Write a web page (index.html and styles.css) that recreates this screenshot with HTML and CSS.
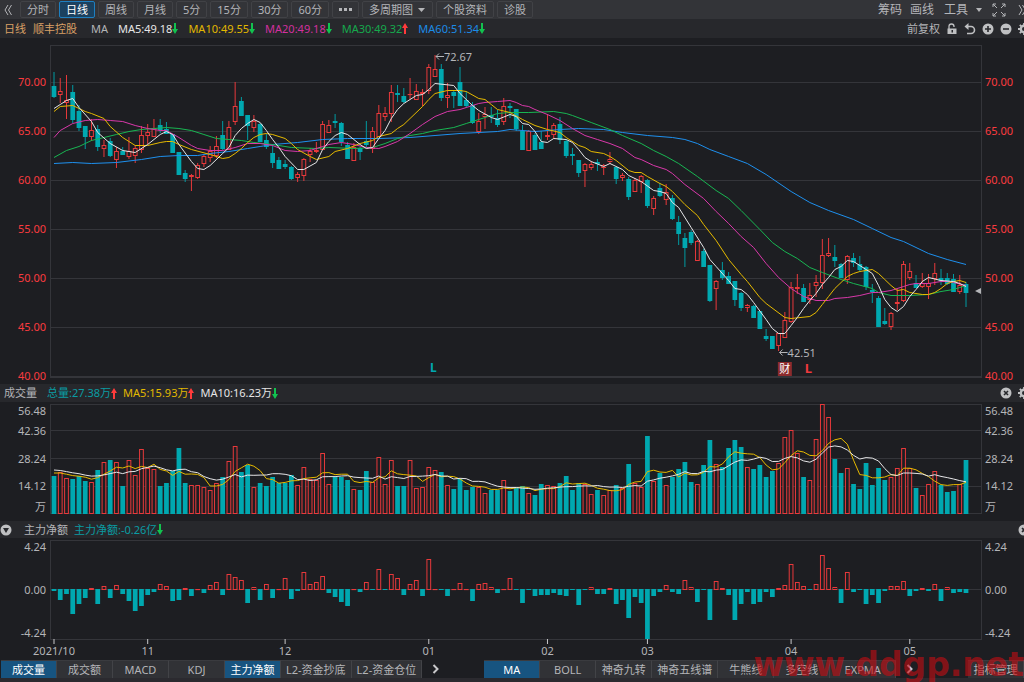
FILE: index.html
```html
<!DOCTYPE html>
<html lang="zh-CN">
<head>
    <meta charset="UTF-8">
    <meta name="viewport" content="width=device-width, initial-scale=1.0">
    <title>顺丰控股 日线</title>
    <link rel="stylesheet" href="styles.css">
</head>
<body>
    <!-- arrows used next to the indicator values -->
    <svg class="defs" width="0" height="0">
        <symbol id="down" viewBox="0 0 6 11"><path d="M2 0h2v6h2L3 11 0 6h2z" fill="#12c24f"/></symbol>
        <symbol id="up" viewBox="0 0 6 11"><path d="M2 11h2V5h2L3 0 0 5h2z" fill="#ff3b3b"/></symbol>
        <symbol id="gear" viewBox="0 0 12 12"><circle cx="6" cy="6" r="3.2" fill="none" stroke="#bfc0c2" stroke-width="2.4"/><path d="M6 0v12M0 6h12M1.8 1.8l8.4 8.4M10.2 1.8l-8.4 8.4" stroke="#bfc0c2" stroke-width="1.8"/><circle cx="6" cy="6" r="2" fill="#28292d"/></symbol>
        <symbol id="close" viewBox="0 0 12 12"><circle cx="6" cy="6" r="5.5" fill="#bfc0c2"/><path d="M4 4l4 4M8 4l-4 4" stroke="#28292d" stroke-width="1.6"/></symbol>
    </svg>

    <nav class="toolbar">
        <button class="icon-btn back" aria-label="收起"><svg width="8" height="12" viewBox="0 0 8 12"><path d="M4 1L1 6l3 5M7.5 1l-3 5 3 5" fill="none" stroke="#b4b5b8"/></svg></button>
        <button class="btn">分时</button>
        <button class="btn active">日线</button>
        <button class="btn">周线</button>
        <button class="btn">月线</button>
        <button class="btn">5分</button>
        <button class="btn">15分</button>
        <button class="btn">30分</button>
        <button class="btn">60分</button>
        <button class="btn dots" aria-label="更多"><svg width="13" height="3" viewBox="0 0 13 3"><path d="M0 0h3v3H0zM5 0h3v3H5zM10 0h3v3h-3z" fill="#b4b5b8"/></svg></button>
        <button class="btn">多周期图 <svg width="8" height="4" viewBox="0 0 8 4"><path d="M0 0h7L3.5 4z" fill="#b4b5b8"/></svg></button>
        <button class="btn">个股资料</button>
        <button class="btn">诊股</button>
        <div class="tools">
            <button class="link-btn">筹码</button>
            <button class="link-btn">画线</button>
            <button class="link-btn tool-menu">工具 <svg width="6" height="4" viewBox="0 0 6 4"><path d="M0 0h6L3 4z" fill="#b4b5b8"/></svg></button>
            <button class="icon-btn" aria-label="全屏"><svg width="14" height="14" viewBox="0 0 14 14"><path d="M1 4V1h3M1 1l4 4M10 1h3v3M13 1L9 5M1 10v3h3M1 13l4-4M13 10v3h-3M13 13L9 9" fill="none" stroke="#b4b5b8"/></svg></button>
            <button class="icon-btn more" aria-label="展开"><svg width="8" height="12" viewBox="0 0 8 12"><path d="M1 1l3 5-3 5M4.5 1l3 5-3 5" fill="none" stroke="#b4b5b8"/></svg></button>
        </div>
    </nav>

    <header class="bar">
        <span class="orange">日线</span>
        <span class="orange name">顺丰控股</span>
        <span class="ma">MA</span>
        <span class="value white">MA5:49.18<svg width="6" height="11"><use href="#down"/></svg></span>
        <span class="value yellow">MA10:49.55<svg width="6" height="11"><use href="#down"/></svg></span>
        <span class="value pink">MA20:49.18<svg width="6" height="11"><use href="#down"/></svg></span>
        <span class="value green">MA30:49.32<svg width="6" height="11"><use href="#up"/></svg></span>
        <span class="value blue">MA60:51.34<svg width="6" height="11"><use href="#down"/></svg></span>
        <div class="bar-tools">
            <button class="link-btn small">前复权</button>
            <button class="icon-btn" aria-label="锁定"><svg width="12" height="12" viewBox="0 0 12 12"><path d="M3 6V3.5a2.5 2.5 0 0 1 5 0V4" fill="none" stroke="#bfc0c2" stroke-width="1.3"/><path d="M1.5 5.5h9V11h-9z" fill="#bfc0c2"/><path d="M5.5 7H7v2.5H5.5z" fill="#28292d"/></svg></button>
            <button class="icon-btn" aria-label="撤销"><svg width="12" height="12" viewBox="0 0 12 12"><path d="M2 3.5h5a3.4 3.4 0 0 1 0 7H3" fill="none" stroke="#bfc0c2" stroke-width="1.6"/><path d="M4.5 0v7L.5 3.5z" fill="#bfc0c2"/></svg></button>
            <button class="icon-btn" aria-label="放大"><svg width="12" height="12" viewBox="0 0 12 12"><circle cx="6" cy="6" r="5.5" fill="#bfc0c2"/><path d="M6 3v6M3 6h6" stroke="#28292d" stroke-width="1.6"/></svg></button>
            <button class="icon-btn" aria-label="缩小"><svg width="12" height="12" viewBox="0 0 12 12"><circle cx="6" cy="6" r="5.5" fill="#bfc0c2"/><path d="M3 6h6" stroke="#28292d" stroke-width="1.6"/></svg></button>
            <button class="icon-btn" aria-label="设置"><svg width="12" height="12"><use href="#gear"/></svg></button>
        </div>
    </header>

    <section class="pane">
        <div class="axis price-axis left">
            <span>70.00</span><span>65.00</span><span>60.00</span><span>55.00</span><span>50.00</span><span>45.00</span><span>40.00</span>
        </div>
        <svg id="price" class="plot price-plot"></svg>
        <div class="axis price-axis">
            <span>70.00</span><span>65.00</span><span>60.00</span><span>55.00</span><span>50.00</span><span>45.00</span><span>40.00</span>
        </div>
    </section>

    <header class="bar">
        <span class="pane-name">成交量</span>
        <span class="value teal">总量:27.38万<svg width="6" height="11"><use href="#up"/></svg></span>
        <span class="value yellow tight">MA5:15.93万<svg width="6" height="11"><use href="#up"/></svg></span>
        <span class="value white tight">MA10:16.23万<svg width="6" height="11"><use href="#down"/></svg></span>
        <div class="bar-tools">
            <button class="icon-btn" aria-label="关闭"><svg width="12" height="12"><use href="#close"/></svg></button>
            <button class="icon-btn" aria-label="设置"><svg width="12" height="12"><use href="#gear"/></svg></button>
        </div>
    </header>

    <section class="pane">
        <div class="axis volume-axis left">
            <span>56.48</span><span>42.36</span><span>28.24</span><span>14.12</span><span>万</span>
        </div>
        <svg id="volume" class="plot volume-plot"></svg>
        <div class="axis volume-axis">
            <span>56.48</span><span>42.36</span><span>28.24</span><span>14.12</span><span>万</span>
        </div>
    </section>

    <header class="bar flow-bar">
        <button class="icon-btn" aria-label="切换指标"><svg width="12" height="12" viewBox="0 0 12 12"><circle cx="6" cy="6" r="5.5" fill="#bfc0c2"/><path d="M3 4h6L6 9z" fill="#28292d"/></svg></button>
        <span class="flow-name">主力净额</span>
        <span class="value teal">主力净额:-0.26亿<svg width="6" height="11"><use href="#down"/></svg></span>
        <div class="bar-tools">
            <button class="icon-btn" aria-label="关闭"><svg width="12" height="12"><use href="#close"/></svg></button>
        </div>
    </header>

    <section class="pane">
        <div class="axis flow-axis left"><span>4.24</span><span>0.00</span><span>-4.24</span></div>
        <svg id="flow" class="plot flow-plot"></svg>
        <div class="axis flow-axis"><span>4.24</span><span>0.00</span><span>-4.24</span></div>
    </section>

    <footer class="tabs">
        <div class="tab-group">
            <button class="tab active">成交量</button>
            <button class="tab">成交额</button>
            <button class="tab">MACD</button>
            <button class="tab">KDJ</button>
            <button class="tab active">主力净额</button>
            <button class="tab">L2-资金抄底</button>
            <button class="tab">L2-资金仓位</button>
            <button class="next" aria-label="更多指标"><svg width="8" height="10" viewBox="0 0 8 10"><path d="M1.5 1l4 4-4 4" fill="none" stroke="#c8c8ca" stroke-width="2"/></svg></button>
        </div>
        <div class="tab-group main-group">
            <button class="tab active">MA</button>
            <button class="tab">BOLL</button>
            <button class="tab">神奇九转</button>
            <button class="tab">神奇五线谱</button>
            <button class="tab">牛熊线</button>
            <button class="tab">多空线</button>
            <button class="tab wide">EXPMA</button>
            <button class="next" aria-label="更多主图指标"><svg width="8" height="10" viewBox="0 0 8 10"><path d="M1.5 1l4 4-4 4" fill="none" stroke="#c8c8ca" stroke-width="2"/></svg></button>
        </div>
        <button class="tab manage">指标管理</button>
        <div class="watermark">www.ddgp.net</div>
    </footer>

    <script src="chart.js"></script>
</body>
</html>
```
FILE: styles.css
```css
* {
    box-sizing: border-box;
}

body {
    margin: 0;
    min-height: 100vh;
    background: #1d1e22;
    color: #b4b5b8;
    font-family: "Noto Sans", "Noto Sans CJK SC", sans-serif;
    font-size: 11px;
    line-height: 16px;
    overflow: hidden;
}

button {
    margin: 0;
    padding: 0;
    border: none;
    background: none;
    color: inherit;
    font: inherit;
    white-space: nowrap;
    cursor: pointer;
}

svg {
    flex-shrink: 0;
}

.defs {
    display: block;
}

/* toolbar */
.toolbar {
    display: flex;
    align-items: center;
    gap: 3px;
    height: 19px;
    background: #333438;
    overflow: hidden;
}

.icon-btn {
    display: flex;
    align-items: center;
    flex-shrink: 0;
}

.back {
    width: 17px;
    padding-left: 4px;
}

.btn {
    display: flex;
    align-items: center;
    gap: 5px;
    height: 17px;
    padding: 0 6px;
    border: 1px solid #414246;
    border-radius: 2px;
}

.btn.active {
    border-color: #1e7fc0;
    background: #1b415f;
    color: #fff;
}

.tools {
    display: flex;
    align-items: center;
    gap: 8px;
    margin-left: auto;
    margin-right: -2px;
}

.link-btn {
    font-size: 12px;
}

.link-btn.small {
    font-size: 11px;
}

.tool-menu {
    display: flex;
    align-items: center;
    gap: 8px;
    margin: 0 2px;
}

.more {
    margin-left: 4px;
}

/* indicator bars */
.bar {
    display: flex;
    align-items: center;
    height: 19px;
    padding-left: 4px;
    background: #27282c;
    white-space: nowrap;
    overflow: hidden;
}

.pane + .bar {
    height: 18px;
}

.pane + .flow-bar {
    height: 17px;
    padding-left: 0;
}

.name {
    margin-left: 7px;
}

.ma {
    margin-left: 14px;
}

.value {
    display: flex;
    align-items: center;
    margin-left: 10px;
}

.value.tight {
    margin-left: 6px;
}

.flow-name {
    margin: 0 -4px 0 12px;
}

.bar-tools {
    display: flex;
    align-items: center;
    gap: 6px;
    margin-left: auto;
    margin-right: -6px;
}

.orange { color: #d9a066; }
.white { color: #e6e6e6; }
.yellow { color: #e2b800; }
.pink { color: #d2309f; }
.green { color: #16a84c; }
.blue { color: #1c8be6; }
.teal { color: #0a9ca3; }

/* chart panes */
.pane {
    display: grid;
    grid-template-columns: 50px 1fr 42px;
}

.plot {
    display: block;
    width: 100%;
    overflow: visible;
    font-size: 11px;
}

.price-plot { height: 346px; }
.volume-plot { height: 119px; }
.flow-plot { height: 122px; }

.axis {
    padding-left: 3px;
}

.axis.left {
    padding-left: 0;
    padding-right: 4px;
    text-align: right;
}

.price-axis {
    display: flex;
    flex-direction: column;
    justify-content: space-between;
    padding-top: 36px;
    color: #fa3b3f;
}

.volume-axis {
    display: grid;
    grid-template-rows: 18px 22px 34px 20px 22px;
    align-items: center;
}

.flow-axis {
    display: flex;
    flex-direction: column;
    justify-content: space-between;
    padding-top: 1px;
    padding-bottom: 19px;
}

/* chart shapes */
.frame, .grid {
    fill: none;
    stroke: #34353a;
    shape-rendering: crispEdges;
}

.rise {
    fill: #1d1e22;
    stroke: #e8393b;
}

.fall {
    fill: #00a8b0;
    stroke: none;
}

.rise-wick { stroke: #e8393b; }
.fall-wick { stroke: #009ba2; }

.line {
    fill: none;
    stroke-width: 1;
    stroke-linejoin: round;
}

.line-white { stroke: #e6e6e8; }
.line-yellow { stroke: #e6ba00; }
.line-pink { stroke: #d938aa; }
.line-green { stroke: #18b652; }
.line-blue { stroke: #1e90ee; }

.tick {
    stroke: #c8c8ca;
    stroke-width: 1;
}

.note { fill: #b4b5b8; }
.note-arrow {
    fill: none;
    stroke: #b4b5b8;
}
.badge { fill: #8c2b2d; }
.badge-text { fill: #fff; }
.mark-red { fill: #f0393d; }
.mark-teal { fill: #00a8b0; }

/* bottom tabs */
.tabs {
    position: relative;
    display: flex;
    height: 22px;
    padding-left: 1px;
    border-bottom: 4px solid #2b2a2f;
}

.tab-group {
    display: flex;
}

.main-group {
    margin-left: 44px;
}

.tab {
    min-width: 56px;
    height: 18px;
    padding: 0 5px;
    border-right: 1px solid #424347;
    border-top: 1px solid #3a3b3f;
    background: #313236;
}

.tab.active {
    background: #175480;
    color: #fff;
}

.tab.wide {
    min-width: 66px;
}

.next {
    padding-left: 10px;
    display: flex;
    align-items: center;
}

.manage {
    margin-left: auto;
}

/* overlaps the tabs and the date axis */
.watermark {
    position: absolute;
    right: 0;
    bottom: -7px;
    color: rgba(200, 12, 18, 0.62);
    font: bold 33px/40px "DejaVu Sans", sans-serif;
    pointer-events: none;
}
```
FILE: chart.js
```js
// one row per day: r = rise / f = fall, then high, body top, body bottom, low
const candles = `f72,86,96,98 r78,91,94,103 r75,100,102,119 f85,92,119,123 f105,111,127,131 f126,126,136,149 r119,130,136,141 f125,129,146,151 r140,145,148,157 f138,141,155,157
r147,151,159,168 f147,151,154,155 r137,151,156,159 r145,148,155,163 r126,135,149,153 r124,132,135,144 r119,128,136,137 f119,125,129,133 f122,129,133,134 f134,134,152,152
f152,152,174,175 f170,173,178,182 r174,175,176,191 r163,165,177,179 r155,156,163,167 r146,151,157,162 r136,146,155,158 f121,135,148,150 r121,127,149,150 r82,106,121,125
f97,101,115,116 f115,115,125,140 r115,121,127,132 f123,124,141,142 f134,140,146,149 f144,153,162,168 f157,160,168,168 f160,164,166,169 f166,167,178,180 r172,174,177,182
r158,159,175,181 r148,151,154,162 r142,150,151,153 r121,124,149,149 r120,125,132,133 f114,121,122,128 f122,123,141,146 f142,145,158,159 r143,147,160,160 f147,148,151,160
f121,141,144,147 r127,131,148,153 r105,113,136,137 r107,113,116,121 r85,92,113,122 f85,93,94,102 f88,96,101,103 r78,94,94,99 r84,91,99,100 r89,92,93,106
r64,67,90,94 r55,69,76,77 f64,69,97,101 r83,95,97,108 f90,92,95,108 f67,82,105,105 f91,100,105,108 f102,105,122,124 r113,121,131,134 r107,114,116,129
f107,115,116,123 f110,118,124,127 r98,106,121,125 f103,106,107,118 f109,109,128,131 f125,131,149,150 r130,131,150,150 f133,135,149,150 f131,142,148,148 r114,135,136,140
r123,125,134,139 f117,124,139,144 f139,141,155,158 f148,154,155,165 f160,160,172,177 r163,164,170,187 r161,164,167,170 f159,162,163,171 r164,165,167,175 r152,159,161,164
f167,167,178,184 r173,175,177,181 f177,179,196,200 r178,180,191,191 r175,176,181,193 f179,180,205,208 r196,198,208,215 f183,188,195,197 r184,192,199,205 f195,198,218,220
f216,222,233,245 f233,238,247,267 f230,232,242,245 r240,241,260,261 f249,251,266,267 f265,265,300,302 r280,281,288,310 f262,270,277,280 f272,276,283,284 f281,281,299,306
f292,293,307,311 r304,305,307,312 f305,306,317,318 f311,311,328,329 f329,336,338,341 f336,336,348,348 r333,333,345,351 r312,320,337,337 r282,287,321,323 r274,287,288,294
f284,288,301,301 r283,295,299,304 r275,282,285,297 r239,255,282,289 r238,253,255,257 f245,257,260,267 f263,264,277,278 r255,256,279,284 f253,258,262,267 f256,264,269,272
f266,267,286,290 f284,290,291,303 f296,298,326,326 f308,321,323,325 r312,313,326,330 r289,302,303,310 r261,264,300,302 r263,271,277,280 f275,283,287,288 r273,283,286,288
r274,283,286,299 r263,273,278,285 f269,278,280,285 f273,278,283,285 f274,279,291,292 r275,285,291,294 f282,284,292,307`
    .split(/\s+/).map(s => ({ rise: s[0] === 'r', v: s.slice(1).split(',').map(Number) }));

// day:y
const averages = {
    blue: '0:163 3:162 6:163 10:162 14:159 17:156 20:155 23:155 25:153 28:151 31:148 33:146 35:144 39:142 43:139 47:138 52:138 57:137 61:135 65:133 71:131 73:129 77:131 81:129 84:128 88:129 91:132 95:135 99:137 101:139 103:143 105:149 108:156 111:163 114:174 118:191 121:202 124:210 128:219 131:228 134:237 136:241 140:253 143:259 146:264',
    green: '0:157 2:150 4:146 6:140 8:137 10:134 12:131 14:129 16:128 18:127 20:128 22:130 24:134 26:138 28:139 30:140 32:142 35:144 38:147 42:148 44:147 48:148 51:147 53:143 55:138 57:135 59:133 61:130 64:127 66:123 68:119 70:115 71:113 73:112 76:112 80:111 82:113 83:115 86:122 89:129 91:135 94:143 96:150 98:156 100:163 103:176 106:190 108:198 110:210 113:229 115:242 117:251 119:258 121:267 123:272 126:279 128:283 131:288 132:292 134:295 137:295 140:294 142:291 144:289 145:287 146:285',
    pink: '0:137 1:130 3:123 5:120 7:119 9:120 11:121 13:125 15:128 17:130 18:130 20:137 22:145 23:148 25:150 27:150 29:147 31:143 33:143 35:145 37:150 39:151 41:150 43:146 44:144 46:142 48:144 50:147 52:148 53:146 55:141 57:133 59:124 61:116 63:111 65:109 66:107 68:103 69:102 71:101 73:100 74:102 75:105 76:106 77:109 79:114 81:120 83:128 85:135 87:139 89:143 91:148 93:157 94:159 96:165 98:169 99:173 101:184 104:198 106:211 108:223 110:236 112:247 114:263 116:277 118:288 120:296 122:300 123:300 124:300 125:298 127:297 129:295 131:292 132:292 134:290 136:286 137:284 138:283 140:283 142:281 143:281 144:282 146:285',
    yellow: '0:111 1:106 3:105 4:108 5:111 6:113 8:118 9:126 11:137 13:145 15:145 17:142 18:141 19:141 20:144 22:149 25:154 27:158 28:157 29:153 30:148 31:142 32:137 33:134 34:133 35:134 37:138 38:143 39:149 41:156 42:159 44:156 45:151 47:148 49:143 51:140 52:136 54:133 55:128 56:124 57:118 59:106 60:99 61:93 63:90 65:90 66:91 68:98 69:99 70:104 71:109 73:112 75:119 77:125 79:129 81:132 82:137 84:145 85:147 86:151 88:153 89:156 90:160 92:170 93:172 94:172 95:176 97:183 98:186 99:191 101:204 103:215 104:224 106:240 108:259 110:274 111:281 113:297 114:303 117:317 118:318 121:316 122:312 123:304 124:296 125:288 126:282 127:276 128:273 129:271 130:270 131:269 132:273 133:279 134:285 135:290 136:289 137:292 139:294 140:294 141:292 142:288 143:283 144:281 145:280 146:282',
    white: '0:108 1:104 2:100 3:98 4:107 6:121 7:132 9:143 11:150 13:152 15:144 17:134 18:131 19:134 20:144 22:161 23:168 24:169 25:165 27:153 28:147 29:135 30:128 31:123 32:119 33:122 34:130 35:139 36:147 37:156 39:169 40:169 42:162 43:149 44:141 45:135 46:132 47:134 48:139 49:144 50:148 51:147 52:138 53:130 54:118 55:109 56:103 58:95 59:94 60:89 61:83 64:85 65:93 67:105 68:110 70:117 71:119 73:114 74:116 75:123 76:124 77:131 78:141 79:142 80:138 82:139 83:142 84:149 85:157 86:161 88:166 89:163 91:169 92:175 94:181 96:190 97:191 98:193 99:202 100:207 102:227 104:247 105:259 106:266 108:280 109:288 110:289 111:294 112:302 114:319 115:328 116:333 117:333 118:325 119:317 120:308 121:300 122:293 123:284 124:277 125:269 126:266 127:260 128:261 129:265 130:269 131:273 132:285 133:299 134:307 135:311 136:306 137:296 138:289 139:281 140:277 142:280 144:281 145:283 146:286'
};

const volumes = [38,42,36,35,38,33,32,44,52,54,52,28,54,39,65,46,45,28,31,43,66,31,29,29,27,24,31,37,53,68,42,49,27,31,28,37,31,31,39,29,47,35,34,61,30,37,37,34,
    25,24,43,32,57,30,54,28,28,54,26,27,47,44,42,29,25,35,24,27,27,21,24,24,34,23,26,28,21,19,30,29,28,31,38,24,31,30,20,24,19,24,29,26,50,31,27,78,33,41,29,37,45,52,
    32,30,49,74,50,47,66,74,67,47,45,49,37,43,51,77,84,61,37,34,75,110,97,55,41,46,30,25,51,29,46,34,37,46,66,46,26,19,30,43,29,22,23,30,54];
// days before the first one on screen, needed for the averages
const earlier = [47,47,47,47,47,42,42,42,41];

const flows = [-2,-11,-5,-25,-15,-9,2,-15,4,-9,5,-5,-12,-22,-17,-6,-3,6,4,-12,-11,2,-7,1,-4,5,8,-6,16,13,10,-14,3,-11,6,-9,1,12,-10,-2,18,6,8,14,-4,-8,-13,-17,
    1,-3,8,-1,21,-1,16,12,-6,6,10,-7,31,1,-1,-7,1,7,1,-12,6,7,3,-4,1,12,-1,-14,-1,-7,-6,-6,-4,-6,-7,-1,-16,-1,3,-5,-5,2,-15,-11,-29,-8,-14,-50,-7,-3,5,-3,-5,10,
    3,-13,-1,-31,9,2,-6,-31,-15,-3,-15,-13,-3,-8,2,5,26,8,4,-1,6,35,22,3,-14,18,-3,-1,-15,-6,-14,-2,4,4,9,-7,-2,2,-2,6,-12,3,-4,-3,-4];

const months = { 0: '2021/10', 15: '11', 37: '12', 60: '01', 79: '02', 95: '03', 118: '04', 137: '05' };

const PRICE_TOP = 38;

function frame(w, top, bottom, rows) {
    let out = `<rect class="frame" x="0" y="${top + 0.5}" width="${w - 1}" height="${bottom - top}"/>`;
    rows.forEach(y => out += `<path class="grid" d="M0 ${y + 0.5}H${w - 1}"/>`);
    return out;
}

function bar(rise, x, top, bottom, width) {
    if (rise) {
        const h = Math.max(bottom - top - 1, 0);
        return `<rect class="rise" x="${x - width / 2 + 0.5}" y="${top + 0.5}" width="${width - 1}" height="${h || 0.1}"/>`;
    }
    return `<rect class="fall" x="${x - width / 2}" y="${top}" width="${width}" height="${Math.max(bottom - top, 1)}"/>`;
}

function line(color, points) {
    return `<polyline class="line line-${color}" points="${points.map(p => p.join(',')).join(' ')}"/>`;
}

function note(x, y, text) {
    return `<path class="note-arrow" d="M${x + 9} ${y}H${x + 1}M${x + 4} ${y - 3}L${x + 1} ${y}L${x + 4} ${y + 3}"/>
        <text class="note" x="${x + 9}" y="${y + 4}">${text}</text>`;
}

function draw() {
    const price = document.getElementById('price');
    const volume = document.getElementById('volume');
    const flow = document.getElementById('flow');
    const w = price.clientWidth;
    const step = (w - 20) / (candles.length - 1);
    const width = step * 0.76;
    const x = i => 4 + i * step;

    // candles
    let out = frame(w, 7, 339, [44, 93, 142, 191, 240, 289, 338]);
    candles.forEach((c, i) => {
        const [high, top, bottom, low] = c.v.map(v => v - PRICE_TOP);
        out += `<path class="${c.rise ? 'rise-wick' : 'fall-wick'}" d="M${x(i)} ${high}V${low}"/>`;
        out += bar(c.rise, x(i), top, bottom + 1, width);
    });
    for (const color in averages) {
        out += line(color, averages[color].split(' ').map(p => {
            const [day, y] = p.split(':').map(Number);
            return [x(day), y - PRICE_TOP + 0.5];
        }));
    }
    out += note(x(61), 18.5, '72.67');
    out += note(x(116), 314.5, '42.51');
    out += `<rect class="badge" x="${x(117) - 7}" y="324" width="14" height="14"/>
        <text class="badge-text" x="${x(117)}" y="335" text-anchor="middle">财</text>
        <text class="mark-red" x="${x(121) - 5}" y="335" font-size="13" font-weight="bold">L</text>
        <text class="mark-teal" x="${x(61) - 5}" y="334" font-size="12" font-weight="bold">L</text>
        <path class="note" d="M${w - 7} 253l6 -3v6z"/>`;
    price.innerHTML = out;

    // volume
    out = frame(w, 2, 111, [28, 56, 84]);
    volumes.forEach((v, i) => out += bar(candles[i].rise, x(i), 112 - v, 112, width));
    const all = earlier.concat(volumes);
    const mean = n => volumes.map((v, i) => {
        const end = i + earlier.length + 1;
        return [x(i), 112 - all.slice(end - n, end).reduce((a, b) => a + b) / n];
    });
    out += line('yellow', mean(5)) + line('white', mean(10));
    volume.innerHTML = out;

    // money flow and dates
    out = frame(w, 2, 101, [51]);
    flows.forEach((v, i) => out += bar(v > 0, x(i), v > 0 ? 52 - v : 51, v > 0 ? 52 : 51 - v, width));
    for (const day in months) {
        out += `<path class="tick" d="M${x(day)} 101v5"/><text class="note" x="${x(day)}" y="117" text-anchor="middle">${months[day]}</text>`;
    }
    flow.innerHTML = out;
}

draw();
window.addEventListener('resize', draw);
```
